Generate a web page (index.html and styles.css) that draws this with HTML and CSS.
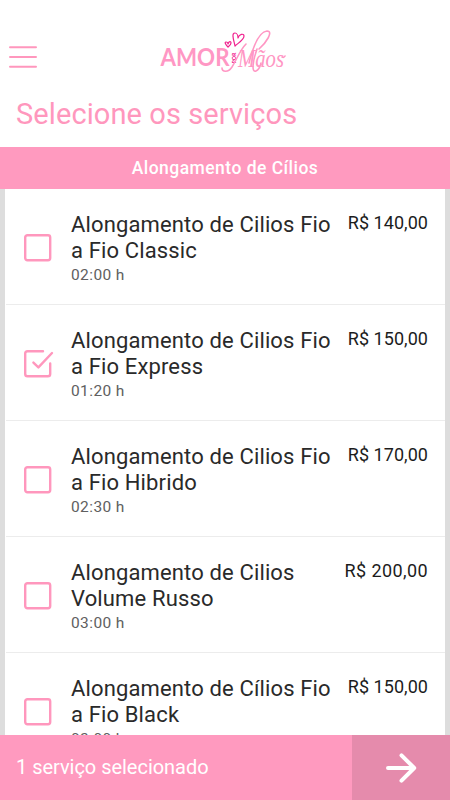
FILE: index.html
```html
<!DOCTYPE html>
<html lang="pt-BR">
<head>
<meta charset="utf-8">
<meta name="viewport" content="width=device-width, initial-scale=1">
<title>Amor por Mãos</title>
<link rel="stylesheet" href="styles.css">
</head>
<body>
<div class="app">
  <header class="topbar">
    <svg class="menu" viewBox="0 0 28 22"><path d="M1 1.3h26M1 11h26M1 20.7h26"/></svg>
    <svg class="logo" viewBox="0 0 130 50">
      <text class="logo-amor" x="-.5" y="40" textLength="69" lengthAdjust="spacingAndGlyphs">AMOR</text>
      <text class="logo-por" transform="translate(74.5 37.5) rotate(-90)" textLength="11" lengthAdjust="spacingAndGlyphs">POR</text>
      <text class="logo-maos" x="77" y="40.5" textLength="46" lengthAdjust="spacingAndGlyphs">Mãos</text>
      <path class="swash" d="M61 42c0 4 6 5 10-1 5-8 8-17 14-23M88 37c3-12 9-31 18-32 7 0-1 12-8 18M96 23c-4 11-6 24-1 22 3-1 4-4 5-8M121 31q2 1 3-1"/>
      <path class="heart" d="M74 20c-1-5-4-13 0-13 2 0 3 3 3 5 1-4 6-5 6-2 0 4-6 7-9 10zM67 21c-2-2-4-5-2-5 1 0 2 1 2 2 1-3 3-3 3-1 0 2-2 3-3 4z"/>
    </svg>
  </header>
  <h1 class="heading"><span>Selecione os serviços</span></h1>
  <h2 class="category">Alongamento de Cílios</h2>
  <main class="services">
    <article class="service">
      <svg class="check" viewBox="0 0 30 30"><rect x="2.2" y="2.2" width="25" height="25" rx="2.2"/></svg>
      <div class="info"><h3 class="name">Alongamento de Cilios Fio<br>a Fio Classic</h3><p class="time">02:00 h</p></div>
      <span class="price">R$ 140,00</span>
    </article>
    <article class="service">
      <svg class="check" viewBox="0 0 30 30"><path d="M20 2.2H4.5Q2.2 2.2 2.2 4.5v20.4q0 2.3 2.3 2.3h20.4q2.3 0 2.3-2.3V14.5M10.4 13.6l5 4.8L29 4"/></svg>
      <div class="info"><h3 class="name">Alongamento de Cilios Fio<br>a Fio Express</h3><p class="time">01:20 h</p></div>
      <span class="price">R$ 150,00</span>
    </article>
    <article class="service">
      <svg class="check" viewBox="0 0 30 30"><rect x="2.2" y="2.2" width="25" height="25" rx="2.2"/></svg>
      <div class="info"><h3 class="name">Alongamento de Cilios Fio<br>a Fio Hibrido</h3><p class="time">02:30 h</p></div>
      <span class="price">R$ 170,00</span>
    </article>
    <article class="service">
      <svg class="check" viewBox="0 0 30 30"><rect x="2.2" y="2.2" width="25" height="25" rx="2.2"/></svg>
      <div class="info"><h3 class="name">Alongamento de Cilios<br>Volume Russo</h3><p class="time">03:00 h</p></div>
      <span class="price price-wide">R$ 200,00</span>
    </article>
    <article class="service">
      <svg class="check" viewBox="0 0 30 30"><rect x="2.2" y="2.2" width="25" height="25" rx="2.2"/></svg>
      <div class="info"><h3 class="name">Alongamento de Cílios Fio<br>a Fio Black</h3><p class="time">02:00 h</p></div>
      <span class="price">R$ 150,00</span>
    </article>
  </main>
  <footer class="footer">
    <p class="summary">1 serviço selecionado</p>
    <button class="next" aria-label="Continuar"><svg viewBox="0 0 32 32"><path d="M3 16h26M16.5 3.3L29.2 16 16.5 28.7"/></svg></button>
  </footer>
</div>
</body>
</html>
```

FILE: styles.css
```css
* { box-sizing: border-box; }
body, h1, h2, h3, p { margin: 0; }
body { font-family: Roboto, "Liberation Sans", sans-serif; font-weight: 400; background: #fff; }
.app { height: 800px; display: flex; flex-direction: column; overflow: hidden; }
.topbar { height: 90px; flex: none; display: flex; align-items: flex-start; }
.menu { width: 28px; height: 22px; margin: 46px 0 0 9px; }
.menu path { fill: none; stroke: #ff97bd; stroke-width: 2; stroke-linecap: round; }
.logo { width: 130px; height: 50px; margin: 26px 0 0 124px; overflow: visible; }
.logo-amor { font: 700 24px Lato, sans-serif; fill: #ff97c4; }
.logo-por { font: 700 6px Lato, sans-serif; fill: #f0108a; }
.logo-maos { font: italic 400 26px "Liberation Serif", serif; fill: #ff97c4; }
.swash { fill: none; stroke: #ff97c4; stroke-width: 1.6; stroke-linecap: round; }
.heart { fill: none; stroke: #f0208e; stroke-width: 1.2; stroke-linejoin: round; }
.heading { height: 57px; flex: none; padding-left: 16px; font-size: 29px; line-height: 48px; font-weight: 400; letter-spacing: .09px; color: #ff97bd; white-space: nowrap; }
.category { height: 42px; flex: none; background: #ff9abf; color: #fff; text-align: center; font-size: 17.5px; line-height: 42px; font-weight: 500; letter-spacing: .47px; }
.services { flex: 1; min-height: 0; overflow: hidden; border: solid #ddd; border-width: 0 5px; padding: 0 .5px; }
.service { height: 116px; display: flex; border-bottom: 1px solid #ececec; padding: 22.5px 16.5px 0 16.5px; }
.check { width: 30px; height: 30px; margin: 21.5px 19px 0 1px; flex: none; fill: none; stroke: #ff97bd; stroke-width: 2.4; stroke-linecap: round; stroke-linejoin: round; overflow: visible; }
.info { flex: 1; white-space: nowrap; }
.name { margin-left: -1px; font-size: 22px; line-height: 26px; font-weight: 400; letter-spacing: .14px; color: #2a2a2a; }
.time { margin-left: -1px; font-size: 15.5px; line-height: 22px; letter-spacing: .4px; color: #606060; }
.price { font-size: 18px; line-height: 22px; color: #1c1c1c; white-space: nowrap; letter-spacing: .05px; }
.price-wide { letter-spacing: .4px; }
.footer { height: 65px; flex: none; display: flex; background: #ff9abf; }
.summary { flex: 1; padding-left: 16px; font-size: 20px; line-height: 65px; letter-spacing: -.03px; color: #fff; }
.next { width: 98px; border: 0; padding: 0; background: #e58bac; display: flex; align-items: center; justify-content: center; }
.next svg { width: 32px; height: 32px; fill: none; stroke: #fff; stroke-width: 4; stroke-linecap: round; stroke-linejoin: round; }
```
